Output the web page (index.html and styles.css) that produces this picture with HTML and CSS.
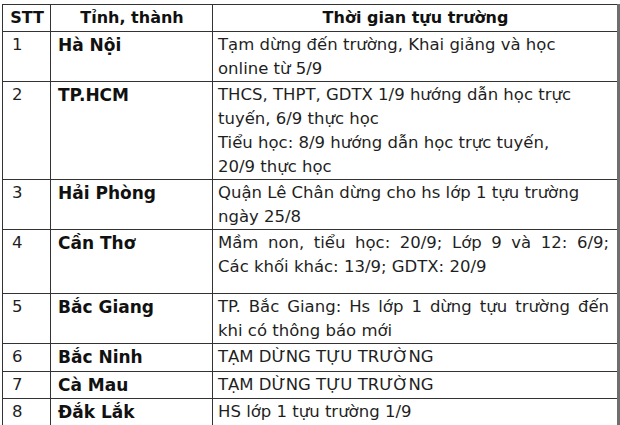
FILE: index.html
```html
<!DOCTYPE html>
<html lang="vi">
<head>
<meta charset="utf-8">
<link rel="stylesheet" href="styles.css">
</head>
<body>
<table class="tbl">
  <colgroup>
    <col class="c1"><col class="c2"><col class="c3">
  </colgroup>
  <tr class="head h-head">
    <th>STT</th><th>Tỉnh, thành</th><th>Thời gian tựu trường</th>
  </tr>
  <tr class="h-r1">
    <td class="num">1</td><td class="prov">Hà Nội</td>
    <td class="txt">Tạm dừng đến trường, Khai giảng và học<br>online từ 5/9</td>
  </tr>
  <tr class="h-r2">
    <td class="num">2</td><td class="prov">TP.HCM</td>
    <td class="txt">THCS, THPT, GDTX 1/9 hướng dẫn học trực<br>tuyến, 6/9 thực học<br>Tiểu học: 8/9 hướng dẫn học trực tuyến,<br>20/9 thực học</td>
  </tr>
  <tr class="h-r3">
    <td class="num">3</td><td class="prov">Hải Phòng</td>
    <td class="txt">Quận Lê Chân dừng cho hs lớp 1 tựu trường<br>ngày 25/8</td>
  </tr>
  <tr class="h-r4">
    <td class="num">4</td><td class="prov">Cần Thơ</td>
    <td class="txt"><span class="just">Mầm non, tiểu học: 20/9; Lớp 9 và 12: 6/9;</span>Các khối khác: 13/9; GDTX: 20/9</td>
  </tr>
  <tr class="h-r5">
    <td class="num">5</td><td class="prov">Bắc Giang</td>
    <td class="txt"><span class="just">TP. Bắc Giang: Hs lớp 1 dừng tựu trường đến</span>khi có thông báo mới</td>
  </tr>
  <tr class="h-r6">
    <td class="num">6</td><td class="prov">Bắc Ninh</td>
    <td class="txt">TẠM DỪNG TỰU TRƯỜNG</td>
  </tr>
  <tr class="h-r7">
    <td class="num">7</td><td class="prov">Cà Mau</td>
    <td class="txt">TẠM DỪNG TỰU TRƯỜNG</td>
  </tr>
  <tr class="h-r8">
    <td class="num">8</td><td class="prov">Đắk Lắk</td>
    <td class="txt">HS lớp 1 tựu trường 1/9</td>
  </tr>
</table>
</body>
</html>
```
FILE: styles.css
```css
html, body {
  margin: 0;
  padding: 0;
  background: #ffffff;
}
body {
  padding: 4px 0 0 2px;
  font-family: "DejaVu Sans", "Liberation Sans", sans-serif;
  color: #1f1f1f;
}
.tbl {
  border-collapse: collapse;
  table-layout: fixed;
  width: 616px;
  border-right: 3px solid #6e6e6e;
}
.c1 { width: 48px; }
.c2 { width: 162px; }
.c3 { width: 406px; }
th, td {
  border: 1px solid #333333;
  vertical-align: top;
  font-size: 16.5px;
  line-height: 24px;
  padding: 1px 4px 0 5px;
}
th {
  font-weight: bold;
  font-size: 16px;
  text-align: center;
  padding-top: 1px;
  color: #111;
}
.num { padding-left: 9px; }
.prov { font-weight: bold; font-size: 17px; padding-left: 7px; color: #111; }
.txt { padding-left: 5px; padding-right: 8px; }
.just {
  display: block;
  text-align: justify;
  text-align-last: justify;
}
.h-head { height: 27px; }
.h-r1 { height: 50px; }
.h-r2 { height: 96px; }
.h-r3 { height: 50px; }
.h-r4 { height: 64px; }
.h-r5 { height: 48px; }
.h-r6 { height: 28px; }
.h-r7 { height: 27px; }
.h-r8 { height: 30px; }
```
